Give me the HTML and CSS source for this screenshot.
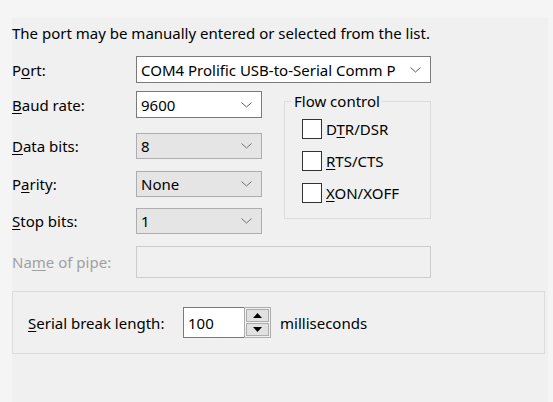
FILE: index.html
```html
<!DOCTYPE html>
<html>
<head>
<meta charset="utf-8">
<link rel="stylesheet" href="styles.css">
</head>
<body>
<div class="panel">
  <p class="intro">The port may be manually entered or selected from the list.</p>
  <div class="form">
    <label class="lbl r1">P<u>o</u>rt:</label>
    <div class="combo edit port r1">
      <span class="val">COM4 Prolific USB-to-Serial Comm P</span>
      <svg class="chev" width="11" height="6" viewBox="0 0 11 6"><polyline points="0.5,0.5 5.5,5 10.5,0.5" fill="none" stroke="#606060" stroke-width="1"/></svg>
    </div>

    <label class="lbl r2"><u>B</u>aud rate:</label>
    <div class="combo edit r2">
      <span class="val">9600</span>
      <svg class="chev" width="11" height="6" viewBox="0 0 11 6"><polyline points="0.5,0.5 5.5,5 10.5,0.5" fill="none" stroke="#606060" stroke-width="1"/></svg>
    </div>

    <fieldset class="flow">
      <legend>Flow control</legend>
      <div class="chk"><span class="box"></span><span>D<u>T</u>R/DSR</span></div>
      <div class="chk"><span class="box"></span><span><u>R</u>TS/CTS</span></div>
      <div class="chk"><span class="box"></span><span><u>X</u>ON/XOFF</span></div>
    </fieldset>

    <label class="lbl r3"><u>D</u>ata bits:</label>
    <div class="combo list r3">
      <span class="val">8</span>
      <svg class="chev" width="11" height="6" viewBox="0 0 11 6"><polyline points="0.5,0.5 5.5,5 10.5,0.5" fill="none" stroke="#707070" stroke-width="1"/></svg>
    </div>

    <label class="lbl r4">P<u>a</u>rity:</label>
    <div class="combo list r4">
      <span class="val">None</span>
      <svg class="chev" width="11" height="6" viewBox="0 0 11 6"><polyline points="0.5,0.5 5.5,5 10.5,0.5" fill="none" stroke="#707070" stroke-width="1"/></svg>
    </div>

    <label class="lbl r5"><u>S</u>top bits:</label>
    <div class="combo list r5">
      <span class="val">1</span>
      <svg class="chev" width="11" height="6" viewBox="0 0 11 6"><polyline points="0.5,0.5 5.5,5 10.5,0.5" fill="none" stroke="#707070" stroke-width="1"/></svg>
    </div>

    <label class="lbl disabled r6">Na<u>m</u>e of pipe:</label>
    <div class="textbox disabled-box r6"></div>
  </div>

  <div class="group">
    <label class="blabel"><u>S</u>erial break length:</label>
    <div class="spin">
      <div class="spin-input">100</div>
      <div class="spin-btns">
        <div class="sb"><svg width="9" height="5" viewBox="0 0 9 5"><polygon points="0,5 9,5 4.5,0" fill="#000"/></svg></div>
        <div class="sb"><svg width="9" height="5" viewBox="0 0 9 5"><polygon points="0,0 9,0 4.5,5" fill="#000"/></svg></div>
      </div>
    </div>
    <span class="unit">milliseconds</span>
  </div>
</div>
</body>
</html>
```

FILE: styles.css
```css
html, body {
  margin: 0;
  padding: 0;
}
body {
  background: #f5f5f5;
  width: 553px;
  height: 402px;
  overflow: hidden;
  box-sizing: border-box;
  padding: 18px 5px 0 12px;
  font-family: "Noto Sans", "Open Sans", sans-serif;
  font-size: 15px;
  color: #000;
}
.panel {
  background: #f0f0f0;
  height: 384px;
  padding-top: 5px;
  box-sizing: border-box;
}
.intro {
  margin: 0;
  height: 20px;
  line-height: 20px;
  white-space: nowrap;
}
.form {
  margin-top: 13px;
  display: grid;
  grid-template-columns: 124px 126px 22px 147px;
  grid-template-rows: 35px 42px 38px 37px 38px 32px;
}
.lbl {
  grid-column: 1;
  display: flex;
  align-items: center;
  align-self: start;
  white-space: nowrap;
}
.r1 { grid-row: 1; height: 27px; }
.r2 { grid-row: 2; height: 27px; }
.r3 { grid-row: 3; height: 26px; }
.r4 { grid-row: 4; height: 26px; }
.r5 { grid-row: 5; height: 26px; }
.r6 { grid-row: 6; height: 32px; }
u {
  text-decoration-thickness: 1px;
  text-underline-offset: 2px;
}
.disabled { color: #a0a0a0; }

.combo {
  grid-column: 2;
  align-self: start;
  box-sizing: border-box;
  display: flex;
  align-items: center;
  padding-left: 4px;
  padding-right: 9px;
}
.combo.port {
  grid-column: 2 / 5;
  justify-content: space-between;
}
.combo.edit {
  background: #fff;
  border: 1px solid #7a7a7a;
}
.combo.list {
  background: #e5e5e5;
  border: 1px solid #adadad;
}
.val {
  flex: 1;
  white-space: nowrap;
}
.chev {
  flex: none;
  margin-left: 6px;
}

.textbox {
  grid-column: 2 / 5;
  box-sizing: border-box;
}
.disabled-box {
  background: #f0f0f0;
  border: 1px solid #cccccc;
}

.flow {
  grid-column: 4;
  grid-row: 2 / 6;
  align-self: start;
  margin: 0;
  height: 128px;
  box-sizing: border-box;
  border: 1px solid #dcdcdc;
  padding: 8px 0 0 7px;
  min-width: 0;
}
.flow legend {
  padding: 0 2px;
  line-height: 20px;
}
.chk {
  display: flex;
  align-items: center;
  gap: 4px;
  height: 20px;
  margin-left: 10px;
  margin-bottom: 12px;
}
.box {
  width: 20px;
  height: 20px;
  box-sizing: border-box;
  border: 1px solid #333;
  background: #fff;
}

.group {
  margin-top: 13px;
  width: 533px;
  height: 63px;
  box-sizing: border-box;
  border: 1px solid #dcdcdc;
  display: flex;
  align-items: center;
  padding-left: 15px;
}
.blabel {
  width: 155px;
  white-space: nowrap;
}
.spin {
  display: flex;
  height: 31px;
}
.spin-input {
  width: 61px;
  height: 31px;
  box-sizing: border-box;
  border: 1px solid #7a7a7a;
  border-right: none;
  background: #fff;
  padding-left: 4px;
  display: flex;
  align-items: center;
}
.spin-btns {
  width: 27px;
  height: 31px;
  box-sizing: border-box;
  border: 1px solid #adadad;
  background: #f0f0f0;
  display: flex;
  flex-direction: column;
  gap: 1px;
  padding: 1px;
}
.sb {
  flex: 1;
  background: #e1e1e1;
  border: 1px solid #adadad;
  display: flex;
  align-items: center;
  justify-content: center;
}
.unit {
  margin-left: 9px;
}
```
